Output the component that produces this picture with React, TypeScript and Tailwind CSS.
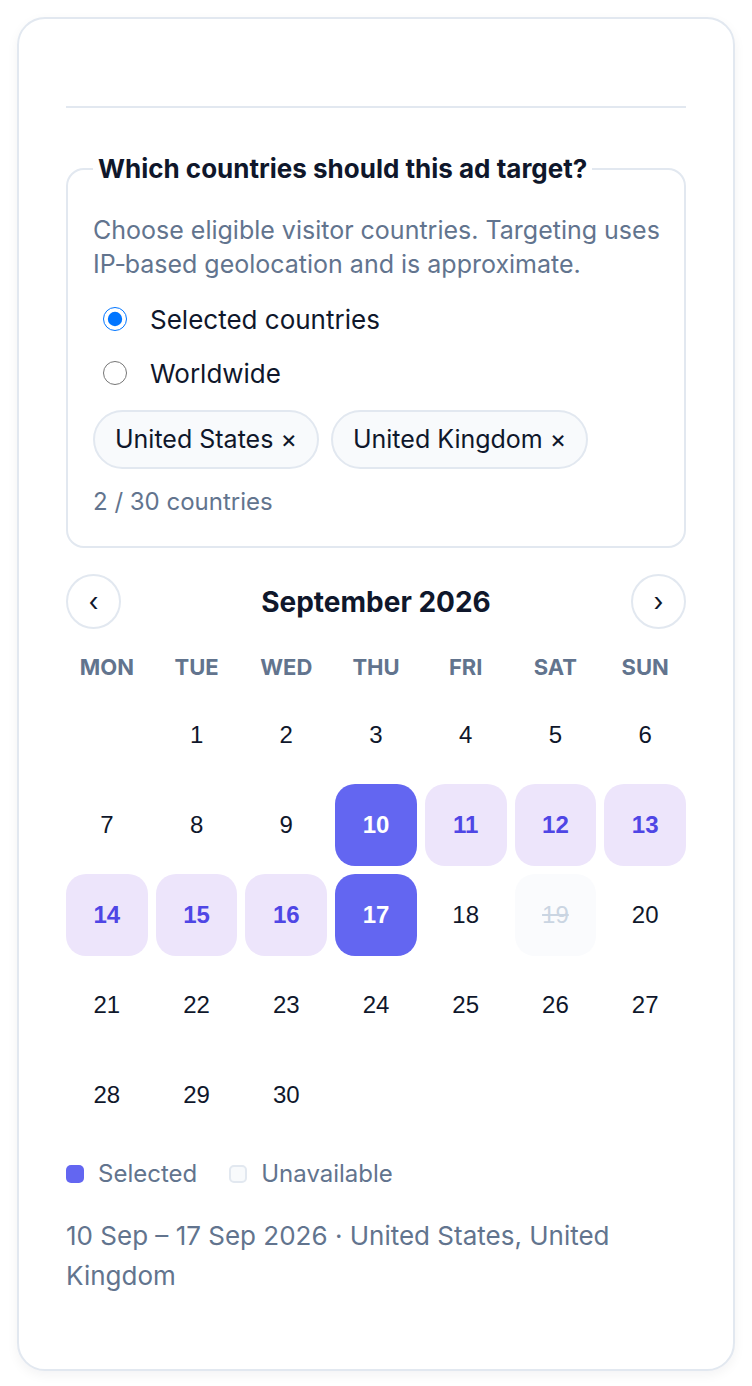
import React, { useState } from 'react';

const WEEKDAYS = ['Mon', 'Tue', 'Wed', 'Thu', 'Fri', 'Sat', 'Sun'];

type DayState = 'none' | 'edge' | 'range' | 'off';

const dayState = (d: number): DayState => {
  if (d === 10 || d === 17) return 'edge';
  if (d > 10 && d < 17) return 'range';
  if (d === 19) return 'off';
  return 'none';
};

const App: React.FC = () => {
  const [scope, setScope] = useState<'selected' | 'worldwide'>('selected');
  const [countries, setCountries] = useState(['United States', 'United Kingdom']);

  // September 2026 starts on a Tuesday
  const cells: (number | null)[] = [null, ...Array.from({ length: 30 }, (_, i) => i + 1)];
  const summary = `10 Sep – 17 Sep 2026 · ${countries.join(', ')}`;

  return (
    <div className="min-h-screen bg-white p-[17px] font-['Inter','Noto_Sans',sans-serif] text-slate-900">
      <div className="rounded-[28px] border-2 border-slate-200 bg-white px-[47px] pt-[47px] pb-[73px] shadow-[0_4px_12px_rgba(15,23,42,0.05)]">
        <div className="h-[40px]" />
        <hr className="border-0 border-t-2 border-slate-200" />

        <fieldset className="mt-[41px] rounded-[18px] border-2 border-slate-200 pl-[25px] pr-[18px] pt-[25px] pb-[26px]">
          <legend className="px-[5px] text-[26px] font-bold text-slate-900">
            Which countries should this ad target?
          </legend>
          <p className="text-[25px] leading-[34px] text-slate-500">
            Choose eligible visitor countries. Targeting uses IP&#8209;based geolocation and is approximate.
          </p>

          <div className="mt-[11px] flex flex-col">
            <label className="flex h-[54px] items-center gap-[23px] pl-[10px] text-[26px]">
              <input
                type="radio"
                name="scope"
                checked={scope === 'selected'}
                onChange={() => setScope('selected')}
                className="h-[24px] w-[24px] accent-[#0075ff]"
              />
              Selected countries
            </label>
            <label className="flex h-[54px] items-center gap-[23px] pl-[10px] text-[26px]">
              <input
                type="radio"
                name="scope"
                checked={scope === 'worldwide'}
                onChange={() => setScope('worldwide')}
                className="h-[24px] w-[24px] accent-[#0075ff]"
              />
              Worldwide
            </label>
          </div>

          <div className="mt-[10px] flex flex-wrap gap-[12px]">
            {countries.map((c) => (
              <button
                key={c}
                onClick={() => setCountries((prev) => prev.filter((x) => x !== c))}
                className="flex h-[59px] items-center rounded-full border-2 border-slate-200 bg-slate-50 px-[20px] text-[25px] text-slate-900"
              >
                {`${c} ×`}
              </button>
            ))}
          </div>

          <p className="mt-[15px] text-[24px] text-slate-500">{`${countries.length} / 30 countries`}</p>
        </fieldset>

        <div className="mt-[26px] flex items-center justify-between">
          <button className="flex h-[55px] w-[55px] items-center justify-center rounded-full border-2 border-slate-200 text-[26px] text-slate-900">
            ‹
          </button>
          <h2 className="text-[28px] font-bold text-slate-900">September 2026</h2>
          <button className="flex h-[55px] w-[55px] items-center justify-center rounded-full border-2 border-slate-200 text-[26px] text-slate-900">
            ›
          </button>
        </div>

        <div className="mt-[22px] grid grid-cols-7 gap-x-[8px]">
          {WEEKDAYS.map((w) => (
            <div key={w} className="text-center text-[22px] font-bold uppercase text-slate-500">
              {w}
            </div>
          ))}
        </div>

        <div className="mt-[10px] grid grid-cols-7 gap-[8px]">
          {cells.map((d, i) => {
            if (d === null) return <div key={`e${i}`} />;
            const s = dayState(d);
            const cls =
              s === 'edge'
                ? 'bg-[#6366f1] font-bold text-white'
                : s === 'range'
                ? 'bg-[#ede5fb] font-bold text-[#4f46e5]'
                : s === 'off'
                ? 'bg-[#fafbfd] text-slate-300 line-through'
                : 'text-slate-900';
            return (
              <div
                key={d}
                className={`flex h-[82px] items-center justify-center rounded-[20px] font-['Liberation_Sans',Arial,sans-serif] text-[24px] ${cls}`}
              >
                {d}
              </div>
            );
          })}
        </div>

        <div className="mt-[20px] flex items-center gap-[32px] text-[24px] text-slate-500">
          <span className="flex items-center gap-[14px]">
            <span className="h-[18px] w-[18px] rounded-[5px] bg-[#6366f1]" />
            Selected
          </span>
          <span className="flex items-center gap-[14px]">
            <span className="h-[18px] w-[18px] rounded-[5px] border-2 border-slate-200 bg-slate-50" />
            Unavailable
          </span>
        </div>

        <p className="mt-[24px] text-[26px] leading-[40px] text-slate-500">{summary}</p>
      </div>
    </div>
  );
};

export default App;
